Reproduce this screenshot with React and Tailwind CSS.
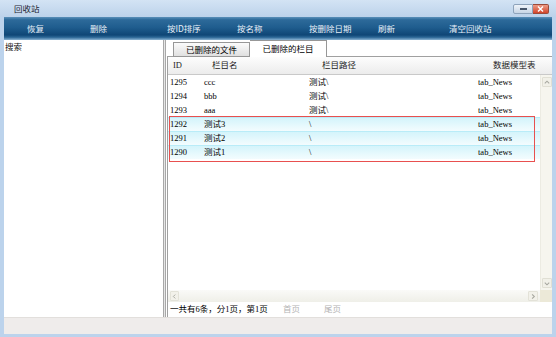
import React from 'react';

const tools = [
  { label: '恢复', w: 'w-[63px]' },
  { label: '删除', w: 'w-[77px]' },
  { label: '按ID排序', w: 'w-[70px]' },
  { label: '按名称', w: 'w-[72px]' },
  { label: '按删除日期', w: 'w-[69px]' },
  { label: '刷新', w: 'w-[71px]' },
  { label: '清空回收站', w: 'w-[80px]' },
];

const rows = [
  { id: '1295', name: 'ccc', path: '测试\\', table: 'tab_News' },
  { id: '1294', name: 'bbb', path: '测试\\', table: 'tab_News' },
  { id: '1293', name: 'aaa', path: '测试\\', table: 'tab_News' },
  { id: '1292', name: '测试3', path: '\\', table: 'tab_News', hl: true },
  { id: '1291', name: '测试2', path: '\\', table: 'tab_News', hl: true },
  { id: '1290', name: '测试1', path: '\\', table: 'tab_News', hl: true },
];

const Chevron = ({ dir }) => {
  const d = {
    up: 'M2 5.5 L4.5 3 L7 5.5',
    down: 'M2 3.5 L4.5 6 L7 3.5',
    left: 'M5.5 2 L3 4.5 L5.5 7',
    right: 'M3.5 2 L6 4.5 L3.5 7',
  }[dir];
  return (
    <svg width="9" height="9" viewBox="0 0 9 9">
      <path d={d} fill="none" stroke="#a8a8a0" strokeWidth="1.2" />
    </svg>
  );
};

export default function App() {
  return (
    <div className="w-[556px] h-[337px] overflow-hidden flex flex-col bg-[#bcd3ec] text-[8.5px] leading-none [font-family:'Liberation_Serif','Noto_Sans_CJK_SC',serif] text-black">
      {/* Title bar */}
      <div className="h-[17px] shrink-0 flex items-center pl-[14px] pr-[7px] bg-[linear-gradient(to_bottom,#d3e3f4,#bcd2ea)]">
        <span className="text-[#1c2533] [font-family:'Noto_Sans_CJK_SC',sans-serif]">回收站</span>
        <div className="ml-auto flex items-center">
          <div className="w-[20px] h-[10px] rounded-l-[2px] border border-[#8ea3bb] bg-[linear-gradient(to_bottom,#eef3f9,#c7d5e5)] flex items-center justify-center">
            <div className="w-[7px] h-[2px] bg-[#46556a]" />
          </div>
          <div className="w-[16px] h-[10px] rounded-r-[2px] border border-l-0 border-[#9b4a3a] bg-[linear-gradient(to_bottom,#ec9a85,#d2452b)] flex items-center justify-center">
            <svg width="7" height="6" viewBox="0 0 7 6">
              <path d="M1 0.5 L6 5.5 M6 0.5 L1 5.5" stroke="#fff" strokeWidth="1.4" />
            </svg>
          </div>
        </div>
      </div>

      <div className="flex-1 flex flex-col mx-[4px] min-h-0">
        {/* Toolbar */}
        <div className="h-[23px] shrink-0 flex items-center pl-[23px] text-[#e6eef7] [font-family:'Noto_Sans_CJK_SC',sans-serif] bg-[linear-gradient(to_bottom,#5a90b9_0%,#2d6a9a_12%,#1f5d8e_45%,#0f4676_78%,#2a6594_88%,#8cb4d4_100%)]">
          {tools.map((t) => (
            <span key={t.label} className={`${t.w} shrink-0 whitespace-nowrap`}>
              {t.label}
            </span>
          ))}
        </div>

        {/* Content */}
        <div className="h-[277px] shrink-0 flex bg-white">
          <div className="w-[159px] shrink-0 pl-[1px] pt-[2px] [font-family:'Noto_Sans_CJK_SC',sans-serif] text-[#111]">
            搜索
          </div>
          <div className="w-[3px] shrink-0 border-l border-r border-[#a8a8a8] bg-[#e6e6e6]" />

          <div className="w-[386px] shrink-0 pl-[1px] flex flex-col">
            {/* Tabs */}
            <div className="h-[17px] shrink-0 flex items-end [font-family:'Noto_Sans_CJK_SC',sans-serif]">
              <div className="w-[6px] h-full border-b border-[#a0a0a0]" />
              <div className="w-[77px] h-[15px] border border-[#979797] bg-[linear-gradient(to_bottom,#fbfbfb,#e0e0e0)] flex items-center justify-center">
                已删除的文件
              </div>
              <div className="w-[77px] h-[17px] border-t border-r border-[#979797] bg-white flex items-center justify-center pb-[1px]">
                已删除的栏目
              </div>
              <div className="flex-1 h-full border-b border-[#a0a0a0]" />
            </div>

            <div className="flex-1 flex flex-col border-l border-[#a0a0a0] min-h-0">
              {/* Header */}
              <div className="h-[18px] shrink-0 grid grid-cols-[36px_105px_169px_1fr] items-center border-b border-[#c9c9c9] bg-[linear-gradient(to_bottom,#fdfdfd,#ececec)] text-[#222]">
                <span className="pl-[5px]">ID</span>
                <span className="pl-[8px]">栏目名</span>
                <span className="pl-[13px]">栏目路径</span>
                <span className="pl-[15px]">数据模型表</span>
              </div>

              {/* Body */}
              <div className="h-[215px] shrink-0 flex">
                <div className="flex-1 relative">
                  {rows.map((r) => (
                    <div
                      key={r.id}
                      className={`h-[14px] grid grid-cols-[36px_105px_169px_1fr] items-center ${
                        r.hl
                          ? 'border-t border-[#b9ecf8] bg-[linear-gradient(to_bottom,#d4f4fb,#f3fcfe)]'
                          : ''
                      }`}
                    >
                      <span className="pl-[2px]">{r.id}</span>
                      <span>{r.name}</span>
                      <span>{r.path}</span>
                      <span>{r.table}</span>
                    </div>
                  ))}
                  <div className="absolute left-[1px] top-[41px] w-[366px] h-[46px] border border-[#e8504f]" />
                </div>
                <div className="w-[12px] shrink-0 bg-[#f6f5ee] border-l border-[#ecebe2] flex flex-col items-center justify-between py-[2px]">
                  <div className="w-[10px] h-[10px] rounded-[1px] border border-[#e0dfd4] bg-[#f1f0e8] flex items-center justify-center">
                    <Chevron dir="up" />
                  </div>
                  <div className="w-[10px] h-[10px] rounded-[1px] border border-[#e0dfd4] bg-[#f1f0e8] flex items-center justify-center">
                    <Chevron dir="down" />
                  </div>
                </div>
              </div>

              {/* Horizontal scrollbar */}
              <div className="h-[12px] shrink-0 flex">
                <div className="flex-1 flex items-center justify-between px-[2px] bg-[linear-gradient(to_bottom,#fafaf8,#efefe8)]">
                  <div className="w-[9px] h-[10px] rounded-[1px] border border-[#e3e2d8] bg-[#f2f1ea] flex items-center justify-center">
                    <Chevron dir="left" />
                  </div>
                  <div className="w-[10px] h-[10px] rounded-[1px] border border-[#e3e2d8] bg-[#f2f1ea] flex items-center justify-center">
                    <Chevron dir="right" />
                  </div>
                </div>
                <div className="w-[12px] shrink-0 bg-[#ece9d8]" />
              </div>

              {/* Footer */}
              <div className="flex-1 flex items-center pl-[2px] [font-family:'Liberation_Serif','Noto_Sans_CJK_SC',serif]">
                <span className="w-[113px] shrink-0 whitespace-nowrap">一共有6条，分1页，第1页</span>
                <span className="w-[41px] shrink-0 text-[#b4b4b4]">首页</span>
                <span className="text-[#b4b4b4]">尾页</span>
              </div>
            </div>
          </div>
        </div>

        {/* Status bar */}
        <div className="h-[17px] shrink-0 bg-[#efeceb] border-t border-[#e2dfdc]" />
      </div>
      <div className="h-[3px] shrink-0" />
    </div>
  );
}
